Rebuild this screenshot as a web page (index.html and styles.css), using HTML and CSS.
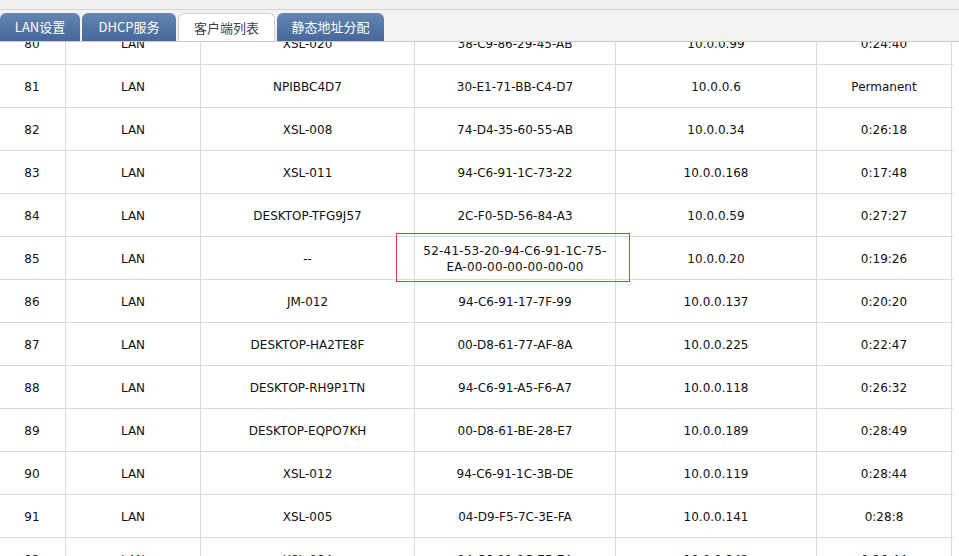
FILE: index.html
```html
<!DOCTYPE html>
<html>
<head>
<meta charset="utf-8">
<link rel="stylesheet" href="styles.css">
</head>
<body>
<div class="page">
  <div class="topbar">
    <div class="tabs">
      <div class="tab t1">LAN设置</div>
      <div class="tab t2">DHCP服务</div>
      <div class="tab t3 active">客户端列表</div>
      <div class="tab t4">静态地址分配</div>
    </div>
  </div>
  <div class="viewport">
    <div class="table">
      <div class="row"><div class="c">80</div><div class="c">LAN</div><div class="c">XSL-020</div><div class="c">38-C9-86-29-45-AB</div><div class="c">10.0.0.99</div><div class="c">0:24:40</div></div>
      <div class="row"><div class="c">81</div><div class="c">LAN</div><div class="c">NPIBBC4D7</div><div class="c">30-E1-71-BB-C4-D7</div><div class="c">10.0.0.6</div><div class="c">Permanent</div></div>
      <div class="row"><div class="c">82</div><div class="c">LAN</div><div class="c">XSL-008</div><div class="c">74-D4-35-60-55-AB</div><div class="c">10.0.0.34</div><div class="c">0:26:18</div></div>
      <div class="row"><div class="c">83</div><div class="c">LAN</div><div class="c">XSL-011</div><div class="c">94-C6-91-1C-73-22</div><div class="c">10.0.0.168</div><div class="c">0:17:48</div></div>
      <div class="row"><div class="c">84</div><div class="c">LAN</div><div class="c">DESKTOP-TFG9J57</div><div class="c">2C-F0-5D-56-84-A3</div><div class="c">10.0.0.59</div><div class="c">0:27:27</div></div>
      <div class="row"><div class="c">85</div><div class="c">LAN</div><div class="c">--</div><div class="c mac2">52-41-53-20-94-C6-91-1C-75-<br>EA-00-00-00-00-00-00</div><div class="c">10.0.0.20</div><div class="c">0:19:26</div></div>
      <div class="row"><div class="c">86</div><div class="c">LAN</div><div class="c">JM-012</div><div class="c">94-C6-91-17-7F-99</div><div class="c">10.0.0.137</div><div class="c">0:20:20</div></div>
      <div class="row"><div class="c">87</div><div class="c">LAN</div><div class="c">DESKTOP-HA2TE8F</div><div class="c">00-D8-61-77-AF-8A</div><div class="c">10.0.0.225</div><div class="c">0:22:47</div></div>
      <div class="row"><div class="c">88</div><div class="c">LAN</div><div class="c">DESKTOP-RH9P1TN</div><div class="c">94-C6-91-A5-F6-A7</div><div class="c">10.0.0.118</div><div class="c">0:26:32</div></div>
      <div class="row"><div class="c">89</div><div class="c">LAN</div><div class="c">DESKTOP-EQPO7KH</div><div class="c">00-D8-61-BE-28-E7</div><div class="c">10.0.0.189</div><div class="c">0:28:49</div></div>
      <div class="row"><div class="c">90</div><div class="c">LAN</div><div class="c">XSL-012</div><div class="c">94-C6-91-1C-3B-DE</div><div class="c">10.0.0.119</div><div class="c">0:28:44</div></div>
      <div class="row"><div class="c">91</div><div class="c">LAN</div><div class="c">XSL-005</div><div class="c">04-D9-F5-7C-3E-FA</div><div class="c">10.0.0.141</div><div class="c">0:28:8</div></div>
      <div class="row"><div class="c">92</div><div class="c">LAN</div><div class="c">XSL-004</div><div class="c">94-C6-91-1C-75-EA</div><div class="c">10.0.0.242</div><div class="c">0:26:44</div></div>
      <div class="highlight"></div>
    </div>
  </div>
</div>
</body>
</html>
```
FILE: styles.css
```css
html, body {
  margin: 0;
  padding: 0;
  background: #ffffff;
}
body {
  font-family: "DejaVu Sans", Verdana, sans-serif;
  font-size: 12px;
  color: #111;
  overflow: hidden;
}
.page {
  width: 959px;
  height: 556px;
  display: flex;
  flex-direction: column;
  overflow: hidden;
}
.topbar {
  position: relative;
  z-index: 2;
  height: 42px;
  box-sizing: border-box;
  background: #f2f2f2;
  border-top: 9px solid #f0f0f0;
  border-bottom: 1px solid #c9c9c9;
  box-shadow: inset 0 1px 0 #d6d6d6;
  display: flex;
  align-items: flex-end;
  flex-shrink: 0;
}
.tabs {
  display: flex;
  gap: 2px;
  height: 28px;
}
.tab {
  height: 28px;
  box-sizing: border-box;
  padding-bottom: 1px;
  display: flex;
  align-items: center;
  justify-content: center;
  font-family: "Noto Sans CJK SC", "DejaVu Sans", sans-serif;
  font-size: 13px;
  color: #ffffff;
  background: linear-gradient(#6486b2, #45679a);
  border-radius: 6px 6px 0 0;
}
.t1 { width: 80px; }
.t2 { width: 94px; }
.t3 { width: 97px; }
.t4 { width: 107px; }
.tab.active {
  background: #ffffff;
  color: #3a3f48;
  border: 1px solid #cfcfcf;
  border-bottom: none;
}
.viewport {
  flex: 1;
  overflow: hidden;
  position: relative;
  z-index: 1;
}
.table {
  position: relative;
  margin-top: -21px;
  margin-left: -2px;
  width: 954px;
  border-top: 1px solid #d9d9d9;
  border-left: 1px solid #d9d9d9;
}
.row {
  display: grid;
  grid-template-columns: 67px 135px 214px 201px 201px 135px;
  height: 43px;
  box-sizing: border-box;
  border-bottom: 1px solid #d9d9d9;
}
.c {
  box-sizing: border-box;
  border-right: 1px solid #d9d9d9;
  padding-top: 2px;
  display: flex;
  align-items: center;
  justify-content: center;
  text-align: center;
  white-space: nowrap;
}
.mac2 {
  line-height: 16px;
  letter-spacing: 0.2px;
}
.highlight {
  position: absolute;
  left: 397px;
  top: 211px;
  width: 234px;
  height: 49px;
  box-sizing: border-box;
  border: 1px solid #e0393e;
}
```
